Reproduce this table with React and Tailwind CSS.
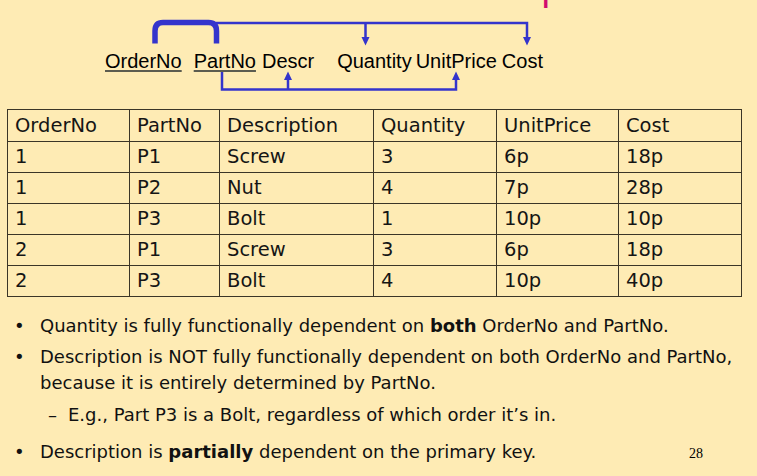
import React from "react";

const rows = [
  ["1", "P1", "Screw", "3", "6p", "18p"],
  ["1", "P2", "Nut", "4", "7p", "28p"],
  ["1", "P3", "Bolt", "1", "10p", "10p"],
  ["2", "P1", "Screw", "3", "6p", "18p"],
  ["2", "P3", "Bolt", "4", "10p", "40p"],
];

const head = ["OrderNo", "PartNo", "Description", "Quantity", "UnitPrice", "Cost"];
const widths = [122, 90, 154, 123, 122, 123];

const Arrows = () => (
  <svg
    className="absolute left-0 top-0"
    width="757"
    height="100"
    viewBox="0 9 757 100"
    fill="none"
  >
    {/* key bracket */}
    <path
      d="M155 43.5 V31 Q155 22.5 163 22.5 H208.5 Q216.5 22.5 216.5 31 V43.5"
      stroke="#3434cc"
      strokeWidth="5.5"
    />
    {/* full dependency */}
    <path d="M216 23 H527 V38 M365.5 23 V38" stroke="#3434cc" strokeWidth="2.5" />
    <path d="M361.5 37 H369.5 L365.5 45.5 Z M523 37 H531 L527 45.5 Z" fill="#3434cc" />
    {/* partial dependency */}
    <path d="M222 72 V89.5 H456 V79 M288 89.5 V79" stroke="#3434cc" strokeWidth="2.5" />
    <path d="M284 80 H292 L288 71.5 Z M452 80 H460 L456 71.5 Z" fill="#3434cc" />
  </svg>
);

const Bullet = ({ children, className = "" }) => (
  <div className={`flex pl-[14px] ${className}`}>
    <span className="w-[26px] shrink-0">•</span>
    <div className="flex-1">{children}</div>
  </div>
);

export default function App() {
  return (
    <div className="relative w-[757px] h-[476px] overflow-hidden bg-[#feebb4] text-[#111]">
      {/* slide title, mostly above the visible area */}
      <div className="h-[44px] -mt-[35px] pl-[43px] whitespace-nowrap font-['Liberation_Sans',Arial,sans-serif] text-[38px] leading-[44px] text-[#d10a6e]">
        Full and Partial Functional Dependencies
      </div>

      {/* dependency diagram */}
      <div className="relative h-[100px] pt-[40px] pl-[105px] font-['Liberation_Sans',Arial,sans-serif] text-[20px] leading-[24px] text-black whitespace-nowrap">
        <Arrows />
        <span className="underline decoration-[1.5px] decoration-[#5c5c50] underline-offset-[2px]">OrderNo</span>
        <span className="ml-[12px] underline decoration-[1.5px] decoration-[#5c5c50] underline-offset-[2px]">PartNo</span>
        <span className="ml-[6px]">Descr</span>
        <span className="ml-[23px]">Quantity</span>
        <span className="ml-[4px]">UnitPrice</span>
        <span className="ml-[5px]">Cost</span>
      </div>

      {/* table */}
      <table className="ml-[7px] w-[734px] table-fixed border-collapse font-['DejaVu_Sans',Verdana,sans-serif] text-[19.5px] text-[#151515]">
        <colgroup>
          {widths.map((w, i) => (
            <col key={i} style={{ width: w }} />
          ))}
        </colgroup>
        <tbody>
          <tr className="h-[32px]">
            {head.map((h) => (
              <td key={h} className="border border-[#3b3527] pl-[7px] py-0 leading-[22px]">
                {h}
              </td>
            ))}
          </tr>
          {rows.map((r, i) => (
            <tr key={i} className="h-[31px]">
              {r.map((c, j) => (
                <td key={j} className="border border-[#3b3527] pl-[7px] py-0 leading-[22px]">
                  {c}
                </td>
              ))}
            </tr>
          ))}
        </tbody>
      </table>

      {/* notes */}
      <div className="mt-[16px] pr-[6px] font-['DejaVu_Sans',Verdana,sans-serif] text-[18px] leading-[26px] text-[#111]">
        <Bullet>
          Quantity is fully functionally dependent on <b>both</b> OrderNo and PartNo.
        </Bullet>
        <Bullet className="mt-[5px]">
          Description is NOT fully functionally dependent on both OrderNo and PartNo,
          because it is entirely determined by PartNo.
        </Bullet>
        <div className="mt-[6px] flex pl-[48px]">
          <span className="w-[20px] shrink-0">–</span>
          <span>E.g., Part P3 is a Bolt, regardless of which order it’s in.</span>
        </div>
        <Bullet className="mt-[11px]">
          <div className="flex items-baseline">
            <span>
              Description is <b>partially</b> dependent on the primary key.
            </span>
            <span className="ml-auto mr-[48px] font-['Liberation_Serif','Times_New_Roman',serif] text-[14px] text-black">
              28
            </span>
          </div>
        </Bullet>
      </div>
    </div>
  );
}
